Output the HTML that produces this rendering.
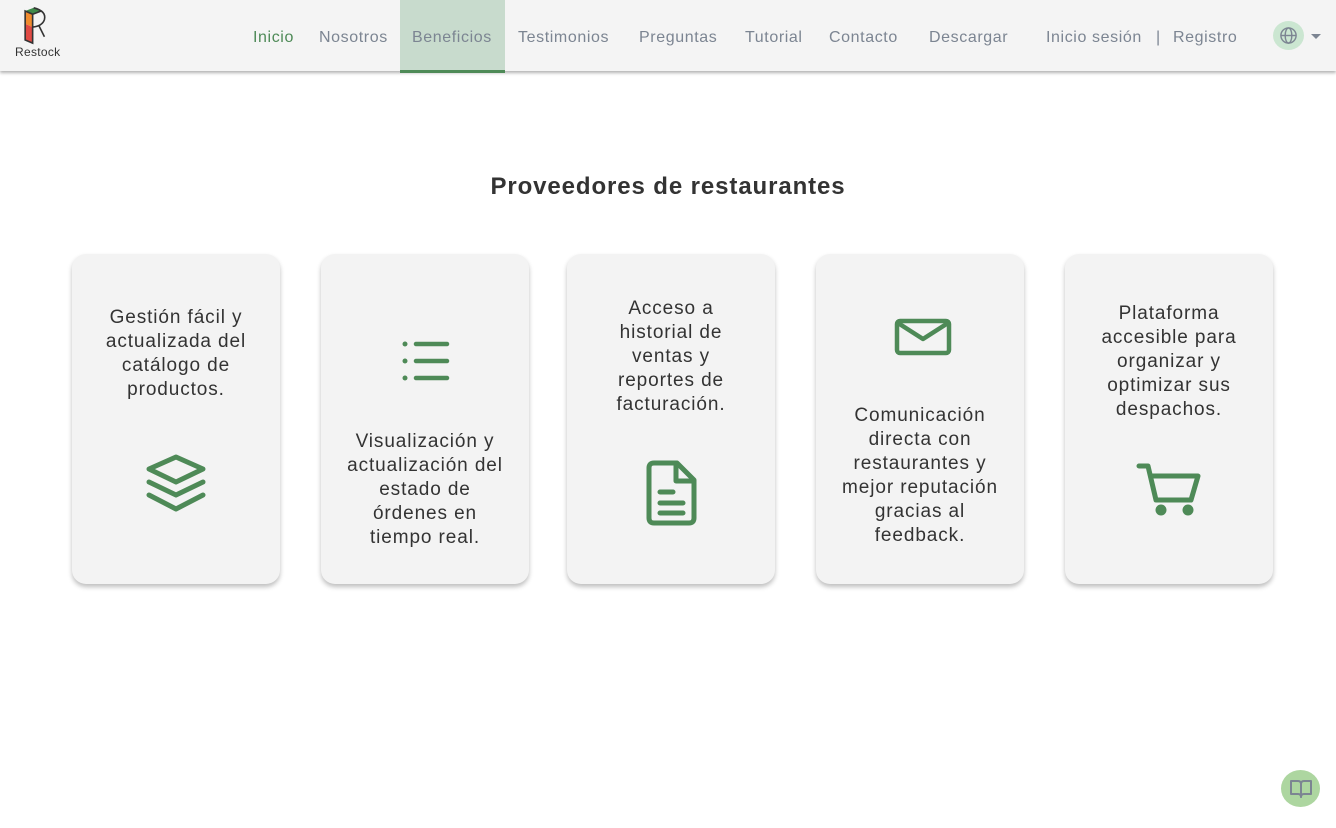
<!DOCTYPE html>
<html><head><meta charset="utf-8"><style>
*{margin:0;padding:0;box-sizing:border-box}
body{width:1336px;height:828px;background:#fff;font-family:"Liberation Sans",sans-serif;position:relative;overflow:hidden}
.nav{position:absolute;left:0;top:0;width:1336px;height:71px;background:#f4f4f4;box-shadow:0 2px 3px rgba(0,0,0,.3)}
.nav a{position:absolute;top:29px;font-size:16px;letter-spacing:0.6px;color:#7c8592;text-decoration:none;white-space:nowrap}
.ben{position:absolute;left:400px;top:0;width:105px;height:73px;background:#c8dbcd;border-bottom:3px solid #4e8a57}
h1{position:absolute;top:173px;left:0;width:1336px;text-align:center;font-size:24px;letter-spacing:0.9px;color:#333;font-weight:bold}
.card{position:absolute;top:254px;width:208px;height:330px;background:#f3f3f3;border-radius:14px;box-shadow:0 3px 5px rgba(0,0,0,.25)}
.t{position:absolute;left:-10px;width:228px;text-align:center;font-size:19px;letter-spacing:0.9px;line-height:24px;color:#333;margin-top:2px}
.card svg{position:absolute}
</style></head><body>
<div class="nav">
<svg style="position:absolute;left:23px;top:6px" width="30" height="40" viewBox="0 0 28 36">
<path d="M2 4 L10 1 L17 4 L9 7Z" fill="#3f8a4a"/><path d="M2 4 L9 7 L9 19 L2 16Z" fill="#f08b2e"/><path d="M2 16 L9 19 L9 34 L2 31Z" fill="#e04a44"/>
<path d="M2 4 L9 7 L9 34 L2 31Z M9 7 L17 4" fill="none" stroke="#333" stroke-width="1.5"/>
<path d="M10 1 Q22 4 20 12 Q18 18 9 19 M15 18 L20 28" fill="none" stroke="#333" stroke-width="1.5"/></svg>
<div style="position:absolute;left:15px;top:45px;font-size:12px;color:#333;letter-spacing:0.3px">Restock</div>
<div class="ben"></div>
<a style="left:253px;color:#4e8a57">Inicio</a>
<a style="left:319px">Nosotros</a>
<a style="left:412px">Beneficios</a>
<a style="left:518px">Testimonios</a>
<a style="left:639px">Preguntas</a>
<a style="left:745px">Tutorial</a>
<a style="left:829px">Contacto</a>
<a style="left:929px">Descargar</a>
<a style="left:1046px">Inicio sesión</a>
<a style="left:1156px">|</a>
<a style="left:1173px">Registro</a>
<div style="position:absolute;left:1273px;top:21px;width:31px;height:29px;border-radius:50%;background:#cbe6d1"></div>
<svg style="position:absolute;left:1279px;top:26px" width="19" height="19" viewBox="0 0 20 20" fill="none" stroke="#7c8592" stroke-width="1.5"><circle cx="10" cy="10" r="8"/><ellipse cx="10" cy="10" rx="3.5" ry="8"/><path d="M2 10H18"/></svg>
<div style="position:absolute;left:1311px;top:34px;border-left:5px solid transparent;border-right:5px solid transparent;border-top:5px solid #7c8592"></div>
</div>
<h1>Proveedores de restaurantes</h1>

<div class="card" style="left:72px">
<div class="t" style="top:50px">Gestión fácil y<br>actualizada del<br>catálogo de<br>productos.</div>
<svg style="left:73px;top:200px" width="62" height="58" viewBox="0 0 62 58" fill="none" stroke="#4e8a57" stroke-width="5" stroke-linejoin="round" stroke-linecap="round"><path d="M31 3 L58 15 L31 28 L4 15Z"/><path d="M4 28 L31 41 L58 28"/><path d="M4 41 L31 55 L58 41"/></svg>
</div>

<div class="card" style="left:321px">
<svg style="left:80px;top:86px" width="50" height="42" viewBox="0 0 50 42" stroke="#4e8a57" stroke-linecap="round"><g stroke-width="4.5"><path d="M15 4H46M15 21H46M15 38H46"/></g><g fill="#4e8a57" stroke="none"><circle cx="4" cy="4" r="2.5"/><circle cx="4" cy="21" r="2.5"/><circle cx="4" cy="38" r="2.5"/></g></svg>
<div class="t" style="top:174px">Visualización y<br>actualización del<br>estado de<br>órdenes en<br>tiempo real.</div>
</div>

<div class="card" style="left:567px">
<div class="t" style="top:41px">Acceso a<br>historial de<br>ventas y<br>reportes de<br>facturación.</div>
<svg style="left:78px;top:206px" width="54" height="66" viewBox="0 0 54 66" fill="none" stroke="#4e8a57" stroke-width="5" stroke-linejoin="round" stroke-linecap="round"><path d="M9 3H32L49 20V58Q49 63 44 63H9Q4 63 4 58V8Q4 3 9 3Z"/><path d="M31 4V21H48"/><path d="M15 32H28M15 43H38M15 53H38"/></svg>
</div>

<div class="card" style="left:816px">
<svg style="left:78px;top:64px" width="58" height="38" viewBox="0 0 58 38" fill="none" stroke="#4e8a57" stroke-width="4.5" stroke-linejoin="round"><rect x="3" y="3" width="52" height="32" rx="3"/><path d="M4 5 L29 21 L54 5"/></svg>
<div class="t" style="top:148px">Comunicación<br>directa con<br>restaurantes y<br>mejor reputación<br>gracias al<br>feedback.</div>
</div>

<div class="card" style="left:1065px">
<div class="t" style="top:46px">Plataforma<br>accesible para<br>organizar y<br>optimizar sus<br>despachos.</div>
<svg style="left:71px;top:208px" width="66" height="56" viewBox="0 0 66 56" fill="none" stroke="#4e8a57" stroke-width="5" stroke-linejoin="round" stroke-linecap="round"><path d="M3 4H12L20 38H55L62 14H15"/><circle cx="25" cy="48" r="3" fill="#4e8a57"/><circle cx="52" cy="48" r="3" fill="#4e8a57"/></svg>
</div>

<div style="position:absolute;left:1281px;top:770px;width:39px;height:37px;border-radius:50%;background:#add6a0"></div>
<svg style="position:absolute;left:1289px;top:777px" width="24" height="24" viewBox="0 0 24 24" fill="none" stroke="#7c8592" stroke-width="2" stroke-linejoin="round"><path d="M2 4H9Q12 4 12 7V20Q12 17 9 17H2Z"/><path d="M22 4H15Q12 4 12 7V20Q12 17 15 17H22Z"/></svg>
</body></html>
